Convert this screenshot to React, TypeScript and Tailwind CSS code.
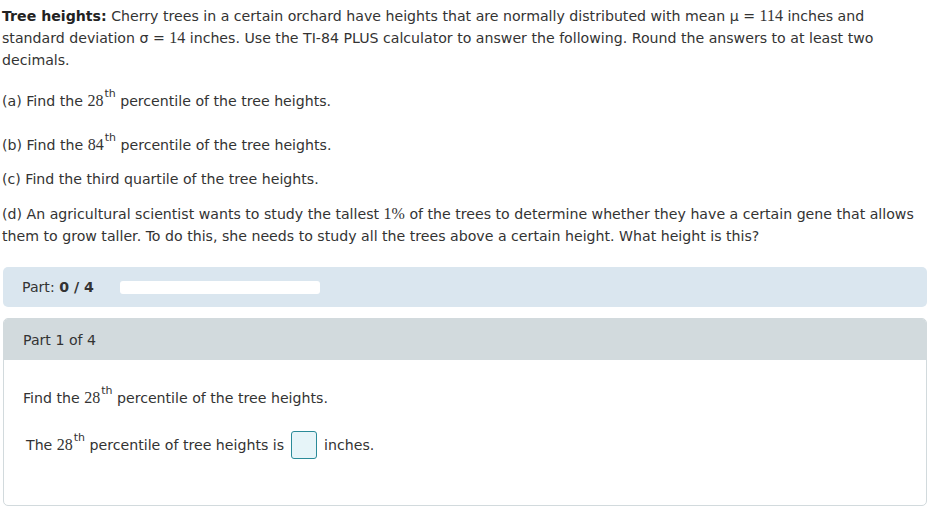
const serif = "font-['Liberation_Serif',serif] text-[16px]";

function Ord({ n }: { n: string }) {
  return (
    <>
      <span className={serif}>{n}</span>
      <sup className="relative -top-[9px] text-[11px] ml-[1px]">th</sup>
    </>
  );
}

export default function App() {
  return (
    <div className="w-[930px] h-[509px] bg-white text-[#333] font-['DejaVu_Sans',Verdana,sans-serif] text-[14.15px] leading-[22px] overflow-hidden">
      <div className="px-[2px] pt-[5px] w-[918px]">
        <p>
          <b className="font-bold text-[#222]">Tree heights:</b> Cherry trees in a certain orchard have heights that
          are normally distributed with mean μ = <span className={serif}>114</span> inches and standard deviation σ ={" "}
          <span className={serif}>14</span> inches. Use the TI-84 PLUS calculator to answer the following. Round the
          answers to at least two decimals.
        </p>
        <p className="mt-[19px]">
          (a) Find the <Ord n="28" /> percentile of the tree heights.
        </p>
        <p className="mt-[22px]">
          (b) Find the <Ord n="84" /> percentile of the tree heights.
        </p>
        <p className="mt-[12px]">(c) Find the third quartile of the tree heights.</p>
        <p className="mt-[13px]">
          (d) An agricultural scientist wants to study the tallest <span className={serif}>1%</span> of the trees to
          determine whether they have a certain gene that allows them to grow taller. To do this, she needs to study
          all the trees above a certain height. What height is this?
        </p>
      </div>

      <div className="mx-[3px] mt-[20px] h-[40px] rounded-[5px] bg-[#dae6ef] flex items-center pl-[19px]">
        <span className="w-[98px]">
          Part: <b className="font-bold">0 / 4</b>
        </span>
        <div className="h-[13px] w-[200px] rounded-[3px] bg-white" />
      </div>

      <div className="mx-[3px] mt-[11px] h-[188px] rounded-[5px] border border-[#d2dadd] overflow-hidden">
        <div className="h-[41px] bg-[#d2dadd] flex items-center pl-[19px]">Part 1 of 4</div>
        <div className="pl-[19px] pt-[27px]">
          <p>
            Find the <Ord n="28" /> percentile of the tree heights.
          </p>
          <p className="mt-[22px] flex items-center pl-[3px]">
            <span>
              The <Ord n="28" /> percentile of tree heights is
            </span>
            <span className="ml-[7px] inline-block h-[28px] w-[26px] rounded-[3px] border border-[#2a8a98] bg-[#e6f4f8]" />
            <span className="ml-[7px]">inches.</span>
          </p>
        </div>
      </div>
    </div>
  );
}
